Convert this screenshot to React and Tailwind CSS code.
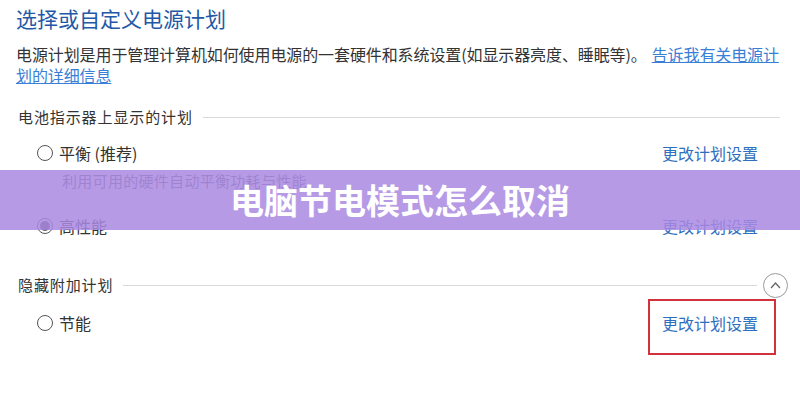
import React from "react";

const font = { fontFamily: '"Noto Sans CJK SC", "Noto Sans", sans-serif' };

function Radio({ checked }) {
  return (
    <span className="flex h-[16px] w-[16px] shrink-0 items-center justify-center rounded-full border border-[#555] bg-white">
      {checked && <span className="h-[10px] w-[10px] rounded-full bg-[#555]" />}
    </span>
  );
}

function SectionHeader({ title, children }) {
  return (
    <div className="flex h-[22px] items-center pl-[2px]">
      <span className="text-[15px] tracking-[0.9px] text-[#333] leading-[22px]">{title}</span>
      <span className="ml-[10px] h-px flex-1 bg-[#d9d9d9]" />
      {children}
    </div>
  );
}

function PlanRow({ label, checked, boxed }) {
  return (
    <div className="flex h-[24px] items-center justify-between pl-[21px] pr-[26px]">
      <label className="flex items-center gap-[6px] text-[16px] leading-[24px] text-[#333]">
        <Radio checked={checked} />
        {label}
      </label>
      <a className="relative text-[16px] leading-[24px] text-[#2f6fc0]">
        更改计划设置
        {boxed && (
          <span className="absolute -left-[14px] -top-[12px] h-[56px] w-[128px] border-2 border-[#d2323c]" />
        )}
      </a>
    </div>
  );
}

export default function App() {
  return (
    <div className="relative h-[400px] w-[800px] overflow-hidden bg-white" style={font}>
      <div className="px-[16px] pt-[4px]">
        <h1 className="text-[21px] leading-[28px] text-[#2358a6] font-normal">选择或自定义电源计划</h1>
        <p className="mt-[12px] text-[16px] tracking-[-0.1px] leading-[21px] text-[#333]">
          电源计划是用于管理计算机如何使用电源的一套硬件和系统设置(如显示器亮度、睡眠等)。
          <a className="ml-[5px] text-[#3a7fd6] underline">告诉我有关电源计</a>
          <br />
          <a className="text-[#3a7fd6] underline">划的详细信息</a>
        </p>

        <div className="mt-[20px] pr-[4px]">
          <SectionHeader title="电池指示器上显示的计划" />
        </div>

        <div className="mt-[13px]">
          <PlanRow label="平衡 (推荐)" />
        </div>
        <p className="mt-[5px] pl-[46px] text-[15px] tracking-[0.3px] leading-[22px] text-[#666]">
          利用可用的硬件自动平衡功耗与性能。
        </p>
        <div className="mt-[22px]">
          <PlanRow label="高性能" checked />
        </div>

        <div className="mt-[36px] -mr-[4px]">
          <SectionHeader title="隐藏附加计划">
            <span className="ml-[6px] flex h-[25px] w-[25px] items-center justify-center rounded-full border border-[#9a9a9a]">
              <svg width="13" height="13" viewBox="0 0 13 13" fill="none" stroke="#666" strokeWidth="1.3">
                <path d="M2 9 L6.5 4 L11 9" />
              </svg>
            </span>
          </SectionHeader>
        </div>

        <div className="mt-[15px]">
          <PlanRow label="节能" boxed />
        </div>
      </div>

      <div className="absolute left-0 top-[170px] flex h-[60px] w-full items-center justify-center bg-[rgba(169,136,226,0.85)]">
        <span className="text-[34px] font-bold leading-none text-white">电脑节电模式怎么取消</span>
      </div>
    </div>
  );
}
